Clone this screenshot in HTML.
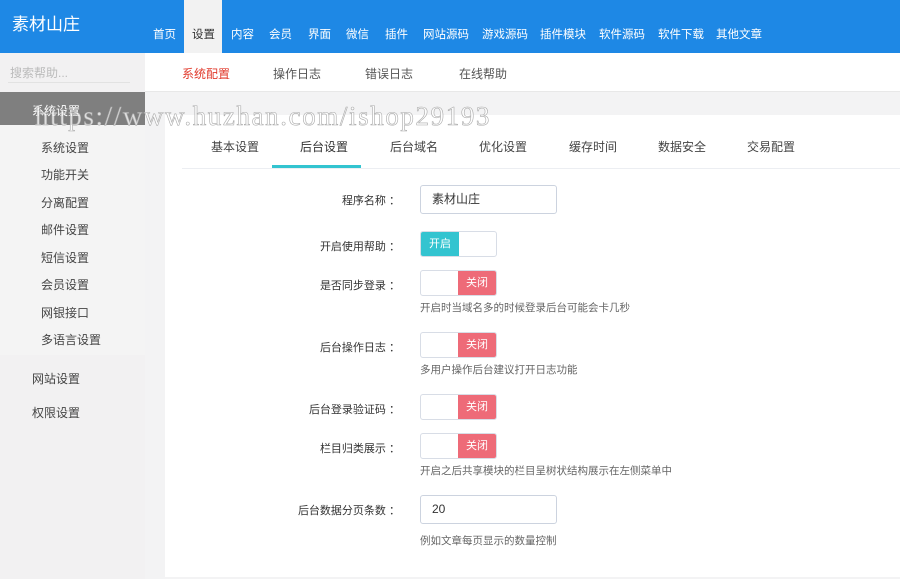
<!DOCTYPE html>
<html><head><meta charset="utf-8"><style>
*{margin:0;padding:0;box-sizing:border-box}
body{width:900px;height:579px;overflow:hidden;background:#f3f3f4;font-family:"Liberation Sans","Noto Sans CJK SC",sans-serif;color:#333;position:relative}
.a{position:absolute;white-space:nowrap}
#hd{position:absolute;left:0;top:0;width:900px;height:53px;background:#1e88e5}
.nav{font-size:11.5px;color:#fff;top:26px}
.sw{position:absolute;left:420px;width:77px;height:26px;border:1px solid #d8dde6;border-radius:3px;background:#fff;overflow:hidden}
.sw span{position:absolute;top:0;height:24px;width:38px;color:#fff;font-size:11px;line-height:24px;text-align:center}
.lab{font-size:11px;color:#333;right:500px;text-align:right}
.hint{font-size:10.5px;color:#666;left:420px}
.inp{position:absolute;left:420px;width:137px;height:29px;border:1px solid #ccd3df;border-radius:3px;background:#fff;font-size:12px;line-height:27px;padding-left:11px;color:#333}
.sb{font-size:12px;color:#444;left:41px}
</style></head><body>
<div id="hd"></div>
<div class="a" style="left:12px;top:10px;font-size:17px;color:#fff">素材山庄</div>
<div class="a" style="left:184px;top:0;width:38px;height:53px;background:#f2f2f2"></div>
<div class="a nav" style="left:153px">首页</div>
<div class="a nav" style="left:192px;color:#333">设置</div>
<div class="a nav" style="left:231px">内容</div>
<div class="a nav" style="left:269px">会员</div>
<div class="a nav" style="left:308px">界面</div>
<div class="a nav" style="left:346px">微信</div>
<div class="a nav" style="left:385px">插件</div>
<div class="a nav" style="left:423px">网站源码</div>
<div class="a nav" style="left:482px">游戏源码</div>
<div class="a nav" style="left:540px">插件模块</div>
<div class="a nav" style="left:599px">软件源码</div>
<div class="a nav" style="left:658px">软件下载</div>
<div class="a nav" style="left:716px">其他文章</div>

<div class="a" style="left:0;top:53px;width:145px;height:526px;background:#f2f1f2"></div>
<div class="a" style="left:10px;top:64px;font-size:12px;color:#bbb">搜索帮助...</div>
<div class="a" style="left:8px;top:82px;width:122px;height:1px;background:#e2e2e2"></div>
<div class="a" style="left:0;top:92px;width:145px;height:33px;background:#7f7f7f"></div>
<div class="a" style="left:32px;top:102px;font-size:12px;color:#fff">系统设置</div>
<div class="a" style="left:0;top:125px;width:145px;height:230px;background:#f4f4f4"></div>
<div class="a sb" style="top:139px">系统设置</div>
<div class="a sb" style="top:166px">功能开关</div>
<div class="a sb" style="top:194px">分离配置</div>
<div class="a sb" style="top:221px">邮件设置</div>
<div class="a sb" style="top:249px">短信设置</div>
<div class="a sb" style="top:276px">会员设置</div>
<div class="a sb" style="top:304px">网银接口</div>
<div class="a sb" style="top:331px">多语言设置</div>
<div class="a sb" style="left:32px;top:370px">网站设置</div>
<div class="a sb" style="left:32px;top:404px">权限设置</div>

<div class="a" style="left:145px;top:53px;width:755px;height:39px;background:#fff;border-bottom:1px solid #e8e8e8"></div>
<div class="a" style="left:182px;top:65px;font-size:12px;color:#e0392b">系统配置</div>
<div class="a" style="left:273px;top:65px;font-size:12px;color:#555">操作日志</div>
<div class="a" style="left:365px;top:65px;font-size:12px;color:#555">错误日志</div>
<div class="a" style="left:459px;top:65px;font-size:12px;color:#555">在线帮助</div>

<div class="a" style="left:165px;top:115px;width:735px;height:462px;background:#fff"></div>
<div class="a" style="left:211px;top:138px;font-size:12px;color:#444">基本设置</div>
<div class="a" style="left:300px;top:138px;font-size:12px;color:#333">后台设置</div>
<div class="a" style="left:390px;top:138px;font-size:12px;color:#444">后台域名</div>
<div class="a" style="left:479px;top:138px;font-size:12px;color:#444">优化设置</div>
<div class="a" style="left:569px;top:138px;font-size:12px;color:#444">缓存时间</div>
<div class="a" style="left:658px;top:138px;font-size:12px;color:#444">数据安全</div>
<div class="a" style="left:747px;top:138px;font-size:12px;color:#444">交易配置</div>
<div class="a" style="left:182px;top:168px;width:718px;height:1px;background:#eceef2"></div>
<div class="a" style="left:272px;top:165px;width:89px;height:3px;background:#33c4d0"></div>

<div class="a lab" style="top:192px">程序名称 ：</div>
<div class="inp" style="top:185px">素材山庄</div>
<div class="a lab" style="top:238px">开启使用帮助 ：</div>
<div class="sw" style="top:231px"><span style="left:0;background:#33c4d0">开启</span></div>
<div class="a lab" style="top:277px">是否同步登录 ：</div>
<div class="sw" style="top:270px"><span style="right:0;background:#ee6b78">关闭</span></div>
<div class="a hint" style="top:300px">开启时当域名多的时候登录后台可能会卡几秒</div>
<div class="a lab" style="top:339px">后台操作日志 ：</div>
<div class="sw" style="top:332px"><span style="right:0;background:#ee6b78">关闭</span></div>
<div class="a hint" style="top:362px">多用户操作后台建议打开日志功能</div>
<div class="a lab" style="top:401px">后台登录验证码 ：</div>
<div class="sw" style="top:394px"><span style="right:0;background:#ee6b78">关闭</span></div>
<div class="a lab" style="top:440px">栏目归类展示 ：</div>
<div class="sw" style="top:433px"><span style="right:0;background:#ee6b78">关闭</span></div>
<div class="a hint" style="top:463px">开启之后共享模块的栏目呈树状结构展示在左侧菜单中</div>
<div class="a lab" style="top:502px">后台数据分页条数 ：</div>
<div class="inp" style="top:495px">20</div>
<div class="a hint" style="top:533px">例如文章每页显示的数量控制</div>

<div class="a" style="left:35px;top:101px;font-family:'Liberation Serif',serif;font-size:27px;color:rgba(255,255,255,0.75);-webkit-text-stroke:0.6px #aaa;letter-spacing:1.6px">https://www.huzhan.com/ishop29193</div>
</body></html>
